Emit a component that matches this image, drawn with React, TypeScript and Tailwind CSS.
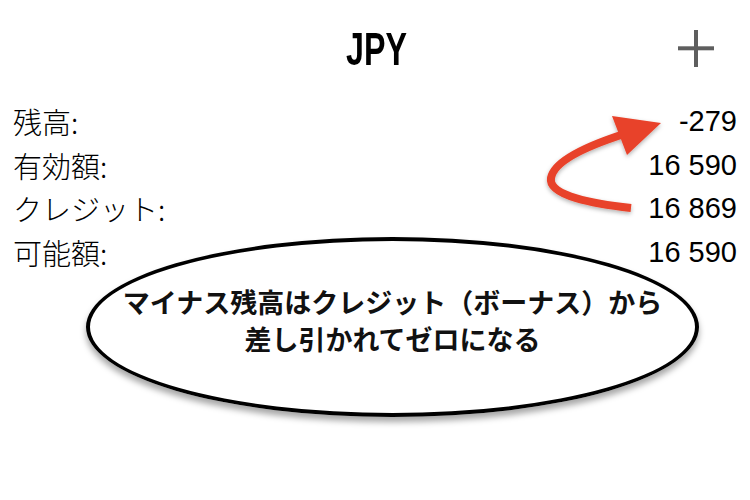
const rows = [
  { label: "残高:", value: "-279" },
  { label: "有効額:", value: "16 590" },
  { label: "クレジット:", value: "16 869" },
  { label: "可能額:", value: "16 590" },
];

const App = () => {
  return (
    <div className="relative w-[750px] h-[500px] bg-white overflow-hidden">
      {/* header */}
      <div className="relative h-[100px] flex items-start justify-center pt-[21px]">
        <h1
          className="text-[46px] leading-[56px] font-bold text-black scale-x-[0.7] ml-[2px]"
          style={{ fontFamily: '"Liberation Sans Narrow", "Liberation Sans", sans-serif' }}
        >
          JPY
        </h1>
        <button className="absolute right-[36px] top-[30px] w-[36px] h-[37px]">
          <svg viewBox="0 0 36 37" className="w-full h-full">
            <rect x="0" y="16.3" width="36" height="4" fill="#5e5e5e" />
            <rect x="16" y="0" width="4" height="37" fill="#5e5e5e" />
          </svg>
        </button>
      </div>

      {/* balances */}
      <div className="flex flex-col px-[13px]">
        {rows.map((row) => (
          <div key={row.label} className="flex items-center justify-between h-[43.5px]">
            <span
              className="text-[29px] text-black font-light"
              style={{ fontFamily: '"Noto Sans CJK JP", sans-serif' }}
            >
              {row.label}
            </span>
            <span
              className="text-[29px] text-black"
              style={{ fontFamily: '"Liberation Sans", Arial, sans-serif' }}
            >
              {row.value}
            </span>
          </div>
        ))}
      </div>

      {/* red arrow annotation */}
      <svg className="absolute left-0 top-0 pointer-events-none" width="750" height="500" viewBox="0 0 750 500">
        <defs>
          <filter id="sh" x="-20%" y="-20%" width="140%" height="140%">
            <feDropShadow dx="0" dy="2" stdDeviation="2" floodColor="#000" floodOpacity="0.3" />
          </filter>
        </defs>
        <g filter="url(#sh)">
          <path
            d="M631 208 C 595 204, 548 196, 551 178 C 554 160, 590 145, 624 134"
            fill="none"
            stroke="#e8422a"
            strokeWidth="8"
          />
          <polygon points="612,116 627,155 661,123" fill="#e8422a" />
        </g>
      </svg>

      {/* callout bubble */}
      <div className="absolute left-[86px] top-[237px] w-[613px] h-[180px] rounded-[50%] border-[4.5px] border-black shadow-[0_5px_6px_rgba(0,0,0,0.35)] flex flex-col items-center justify-center pb-[14px]">
        <p
          className="text-[27px] leading-[37px] font-semibold text-[#111]"
          style={{ fontFamily: '"Noto Sans CJK JP", sans-serif' }}
        >
          マイナス残高はクレジット（ボーナス）から
        </p>
        <p
          className="text-[27px] leading-[37px] font-semibold text-[#111]"
          style={{ fontFamily: '"Noto Sans CJK JP", sans-serif' }}
        >
          差し引かれてゼロになる
        </p>
      </div>
    </div>
  );
};

export default App;
